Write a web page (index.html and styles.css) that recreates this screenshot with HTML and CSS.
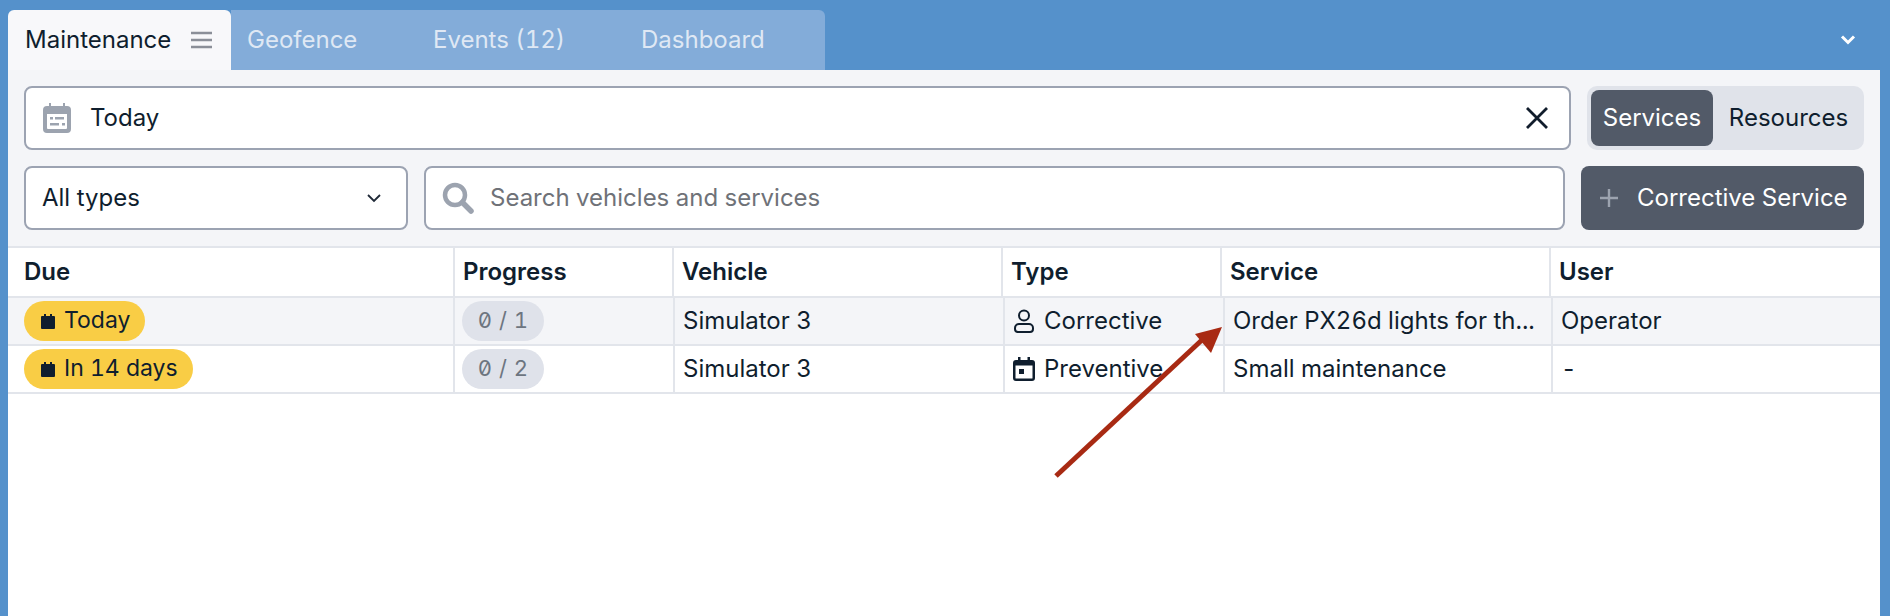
FILE: index.html
```html
<!DOCTYPE html>
<html lang="en">
<head>
<meta charset="utf-8">
<title>Maintenance</title>
<link rel="stylesheet" href="styles.css">
</head>
<body>
<div class="app">
  <nav class="tabbar">
    <div class="tab tab-active">
      <span>Maintenance</span>
      <svg class="tab-menu" viewBox="0 0 22 18" width="21" height="18" preserveAspectRatio="none"><path d="M0 2h22M0 9h22M0 16h22" stroke="#8b8f98" stroke-width="2.4"/></svg>
    </div>
    <div class="tabs-rest">
      <div class="tab tab-1">Geofence</div>
      <div class="tab tab-2">Events (12)</div>
      <div class="tab tab-3">Dashboard</div>
    </div>
    <svg class="tabbar-chevron" viewBox="0 0 16 12" width="16" height="12"><path d="M2 2.500l6 6 6-6" fill="none" stroke="#fff" stroke-width="3"/></svg>
  </nav>
  <main class="panel">
    <section class="filters">
      <div class="row">
        <div class="field date-field">
          <svg class="cal-icon" viewBox="0 0 28 30" width="28" height="30"><path fill="#9ca3af" fill-rule="evenodd" d="M6 0h2v3h12V0h2v3h2a4 4 0 0 1 4 4v19a4 4 0 0 1-4 4H4a4 4 0 0 1-4-4V7a4 4 0 0 1 4-4h2zM4 11v14a1 1 0 0 0 1 1h18a1 1 0 0 0 1-1V11zM7 14h3v2.500H7zM12 14h9v2.500h-9zM7 20h9v2.500H7zM19 20h3v2.500h-3z"/></svg>
          <span class="field-text">Today</span>
          <svg class="close-icon" viewBox="0 0 24 24" width="24" height="24"><path d="M2 2l20 20M22 2L2 22" stroke="#111d2c" stroke-width="2.800" fill="none"/></svg>
        </div>
        <div class="segmented">
          <div class="seg seg-on">Services</div>
          <div class="seg seg-off">Resources</div>
        </div>
      </div>
      <div class="row row-2">
        <div class="field select-field">
          <span>All types</span>
          <svg viewBox="0 0 14 9" width="14" height="9"><path d="M1 1l6 6 6-6" fill="none" stroke="#1f2937" stroke-width="1.800"/></svg>
        </div>
        <div class="field search-field">
          <svg viewBox="0 0 32 32" width="32" height="32"><circle cx="13" cy="13" r="10" fill="none" stroke="#9ca3af" stroke-width="4.500"/><path d="M20.500 20.500L29 29" stroke="#9ca3af" stroke-width="5.500" stroke-linecap="round"/></svg>
          <span class="placeholder">Search vehicles and services</span>
        </div>
        <button class="cta">
          <svg viewBox="0 0 20 20" width="20" height="20"><path d="M10 1v18M1 10h18" stroke="#9ca3af" stroke-width="2.400"/></svg>
          <span>Corrective Service</span>
        </button>
      </div>
    </section>
    <section class="table">
      <div class="tr thead">
        <div class="th">Due</div>
        <div class="th">Progress</div>
        <div class="th">Vehicle</div>
        <div class="th">Type</div>
        <div class="th">Service</div>
        <div class="th">User</div>
      </div>
      <div class="tr tbody alt">
        <div class="td td-pill"><span class="badge due"><svg viewBox="0 0 14 15" width="14" height="15"><path fill="#0f1e2e" d="M3 0h2v2h4V0h2v2h2a1 1 0 0 1 1 1v11a1 1 0 0 1-1 1H1a1 1 0 0 1-1-1V3a1 1 0 0 1 1-1h2z"/></svg>Today</span></div>
        <div class="td td-pill"><span class="badge prog">0 / 1</span></div>
        <div class="td">Simulator 3</div>
        <div class="td type"><svg viewBox="0 0 22 24" width="22" height="24"><circle cx="11" cy="6.500" r="5" fill="none" stroke="#0f1e2e" stroke-width="2"/><path d="M6 15h10a4 4 0 0 1 4 4v1a3 3 0 0 1-3 3H5a3 3 0 0 1-3-3v-1a4 4 0 0 1 4-4z" fill="none" stroke="#0f1e2e" stroke-width="2"/></svg>Corrective</div>
        <div class="td">Order PX26d lights for th...</div>
        <div class="td">Operator</div>
      </div>
      <div class="tr tbody">
        <div class="td td-pill"><span class="badge due"><svg viewBox="0 0 14 15" width="14" height="15"><path fill="#0f1e2e" d="M3 0h2v2h4V0h2v2h2a1 1 0 0 1 1 1v11a1 1 0 0 1-1 1H1a1 1 0 0 1-1-1V3a1 1 0 0 1 1-1h2z"/></svg>In 14 days</span></div>
        <div class="td td-pill"><span class="badge prog">0 / 2</span></div>
        <div class="td">Simulator 3</div>
        <div class="td type"><svg viewBox="0 0 22 24" width="22" height="24"><path fill="#0f1e2e" fill-rule="evenodd" d="M5 0h2.500v3h7V0H17v3h2a3 3 0 0 1 3 3v15a3 3 0 0 1-3 3H3a3 3 0 0 1-3-3V6a3 3 0 0 1 3-3h2zM2.500 8.500V21a.5.5 0 0 0 .5.5h16a.5.5 0 0 0 .5-.5V8.500zM6 12h5v5H6z"/></svg>Preventive</div>
        <div class="td">Small maintenance</div>
        <div class="td">-</div>
      </div>
    </section>
  </main>
  <svg class="arrow" viewBox="0 0 1890 616" width="1890" height="616"><path d="M1056 476L1203 339" stroke="#a82a13" stroke-width="5" fill="none"/><path d="M1222 327L1195 334L1211 353z" fill="#a82a13"/></svg>
</div>
</body>
</html>
```

FILE: styles.css
```css
* { box-sizing: border-box; }
html, body { margin: 0; height: 100%; overflow: hidden; }
body { font-family: Inter, "Liberation Sans", sans-serif; font-size: 24px; font-variant-numeric: tabular-nums; color: #0f1e2e; background: #5591cb; }
.app { position: relative; width: 1890px; height: 616px; padding: 10px 10px 0 8px; display: flex; flex-direction: column; }

.tabbar { height: 60px; display: flex; align-items: stretch; position: relative; flex: none; }
.tab { display: flex; align-items: center; height: 60px; padding-bottom: 2px; }
.tab-active { width: 223px; padding-left: 17px; gap: 20px; background: #f8f8fa; border-radius: 6px 6px 0 0; }
.tab-menu { flex: none; margin-top: 2px; }
.tabs-rest { width: 594px; display: flex; background: #83acd9; border-radius: 0 6px 0 0; color: #dfe8f4; }
.tab-1 { width: 186px; padding-left: 16px; }
.tab-2 { width: 208px; padding-left: 16px; }
.tab-3 { padding-left: 16px; }
.tabbar-chevron { position: absolute; right: 24px; top: 24px; }

.panel { flex: 1; background: #fff; display: flex; flex-direction: column; }
.filters { background: #f4f5f8; height: 176px; padding: 16px; display: flex; flex-direction: column; gap: 16px; }
.row { display: flex; height: 64px; gap: 16px; }
.field { background: #fff; border: 2px solid #9ca3b2; border-radius: 8px; display: flex; align-items: center; height: 64px; padding-bottom: 2px; }
.field svg { margin-top: 2px; flex: none; }
.date-field { flex: 1; padding-left: 17px; padding-right: 20px; }
.field-text { margin-left: 19px; flex: 1; }
.segmented { width: 277px; height: 64px; background: #e0e3ea; border-radius: 10px; padding: 4px; display: flex; }
.seg { display: flex; align-items: center; justify-content: center; flex: 1; padding-bottom: 2px; }
.seg-on { flex: none; width: 122px; background: #525a68; color: #fff; border-radius: 8px; }
.seg-off { padding-left: 4px; }
.select-field { width: 384px; flex: none; padding-left: 16px; padding-right: 25px; justify-content: space-between; }
.search-field { flex: 1; padding-left: 16px; }
.placeholder { margin-left: 16px; color: #6f7278; }
.cta { width: 283px; height: 64px; flex: none; border: 0; border-radius: 8px; background: #525a68; color: #fff; font: inherit; font-variant-numeric: inherit; display: flex; align-items: center; padding: 0 0 2px 18px; gap: 18px; white-space: nowrap; }
.cta svg { margin-top: 2px; }

.table { display: flex; flex-direction: column; }
.tr { display: grid; border-bottom: 2px solid #e2e5eb; }
.thead { grid-template-columns: 445px 219px 329px 219px 329px 1fr; height: 52px; border-top: 2px solid #e2e5eb; background: #fff; font-weight: 600; }
.tbody { grid-template-columns: 445px 220px 330px 220px 328px 1fr; height: 48px; }
.alt { background: #f4f5f8; }
.th { display: flex; align-items: center; padding: 0 0 2px 8px; border-left: 2px solid #e2e5eb; }
.th:first-child { border-left: 0; padding-left: 16px; }
.td { display: flex; align-items: center; padding: 0 0 2px 8px; border-left: 2px solid #e2e5eb; white-space: nowrap; overflow: hidden; }
.td:first-child { border-left: 0; padding-left: 16px; }
.td-pill { padding-bottom: 0; }
.badge { display: inline-flex; align-items: center; height: 40px; border-radius: 20px; padding-bottom: 2px; }
.badge svg { margin-top: 2px; flex: none; }
.due { background: #f9cd45; padding-left: 17px; padding-right: 15px; gap: 9px; font-size: 23px; }
.prog { background: #dfe2ea; color: #6d7580; width: 82px; margin-left: -1px; justify-content: center; font-size: 22px; font-variant-numeric: slashed-zero tabular-nums; word-spacing: 1px; }
.type svg { margin: 2px 9px 0 0; flex: none; }

.arrow { position: absolute; left: 0; top: 0; pointer-events: none; }
```
